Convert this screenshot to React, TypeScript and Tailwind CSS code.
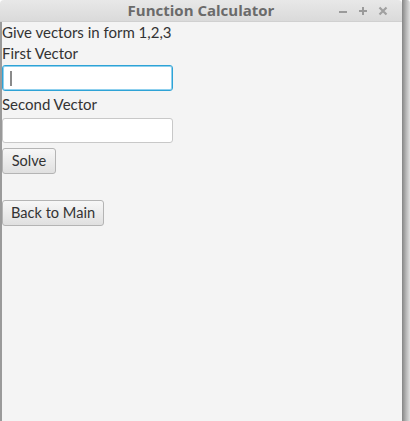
import React from "react";

export default function App() {
  const font = { fontFamily: "Lato, 'Open Sans', sans-serif" };
  return (
    <div className="w-[410px] h-[421px] flex bg-white overflow-hidden" style={font}>
      <div className="w-[402px] h-full flex flex-col">
        <div className="h-[22px] shrink-0 relative flex items-center justify-center rounded-tl-[4px] rounded-tr-[4px] bg-gradient-to-b from-[#e8e8e8] to-[#dadada] border-b border-[#d0d0d0]">
          <span className="text-[15px] font-bold text-[#6a6a6a] leading-none" style={{ fontFamily: "'Open Sans', Lato, sans-serif" }}>
            Function Calculator
          </span>
          <div className="absolute right-[14px] top-0 h-full flex items-center gap-[10px]">
            <svg width="10" height="10" viewBox="0 0 10 10"><rect x="1" y="5" width="8" height="2" fill="#9a9a9a" /></svg>
            <svg width="10" height="10" viewBox="0 0 10 10"><rect x="1" y="4" width="8" height="2" fill="#9a9a9a" /><rect x="4" y="1" width="2" height="8" fill="#9a9a9a" /></svg>
            <svg width="10" height="10" viewBox="0 0 10 10"><path d="M1.5 1.5 L8.5 8.5 M8.5 1.5 L1.5 8.5" stroke="#a0a0a0" strokeWidth="2.2" /></svg>
          </div>
        </div>
        <div className="flex-1 flex flex-col bg-[#f4f4f4] border-l-2 border-[#9a9a9a] text-[15px] text-[#333333]">
          <div className="h-[18px] leading-[18px] mt-[1px]">Give vectors in form 1,2,3</div>
          <div className="h-[18px] leading-[18px] mt-[3px]">First Vector</div>
          <div className="mt-[3px] w-[171px] h-[26px] bg-white border border-[#2ea3d6] rounded-[3px] shadow-[0_0_0_1px_#8fd0ee_inset] flex items-center pl-[7px]">
            <div className="w-[2px] h-[15px] bg-[#8a8a8a]" />
          </div>
          <div className="h-[18px] leading-[18px] mt-[4px]">Second Vector</div>
          <div className="mt-[5px] w-[171px] h-[25px] bg-white border border-[#c8c8c8] rounded-[3px]" />
          <button className="mt-[5px] w-[54px] h-[26px] rounded-[3px] border border-[#b4b4b4] bg-gradient-to-b from-[#f7f7f7] to-[#e0e0e0] text-[14.6px] text-[#333] flex items-center justify-center">
            Solve
          </button>
          <button className="mt-[26px] w-[102px] h-[26px] rounded-[3px] border border-[#b4b4b4] bg-gradient-to-b from-[#f7f7f7] to-[#e0e0e0] text-[14.6px] text-[#333] flex items-center justify-center">
            Back to Main
          </button>
        </div>
      </div>
      <div className="w-[8px] h-full bg-gradient-to-r from-[#858585] via-[#b5b5b5] to-[#e0e0e0] rounded-tr-[3px]" />
    </div>
  );
}
